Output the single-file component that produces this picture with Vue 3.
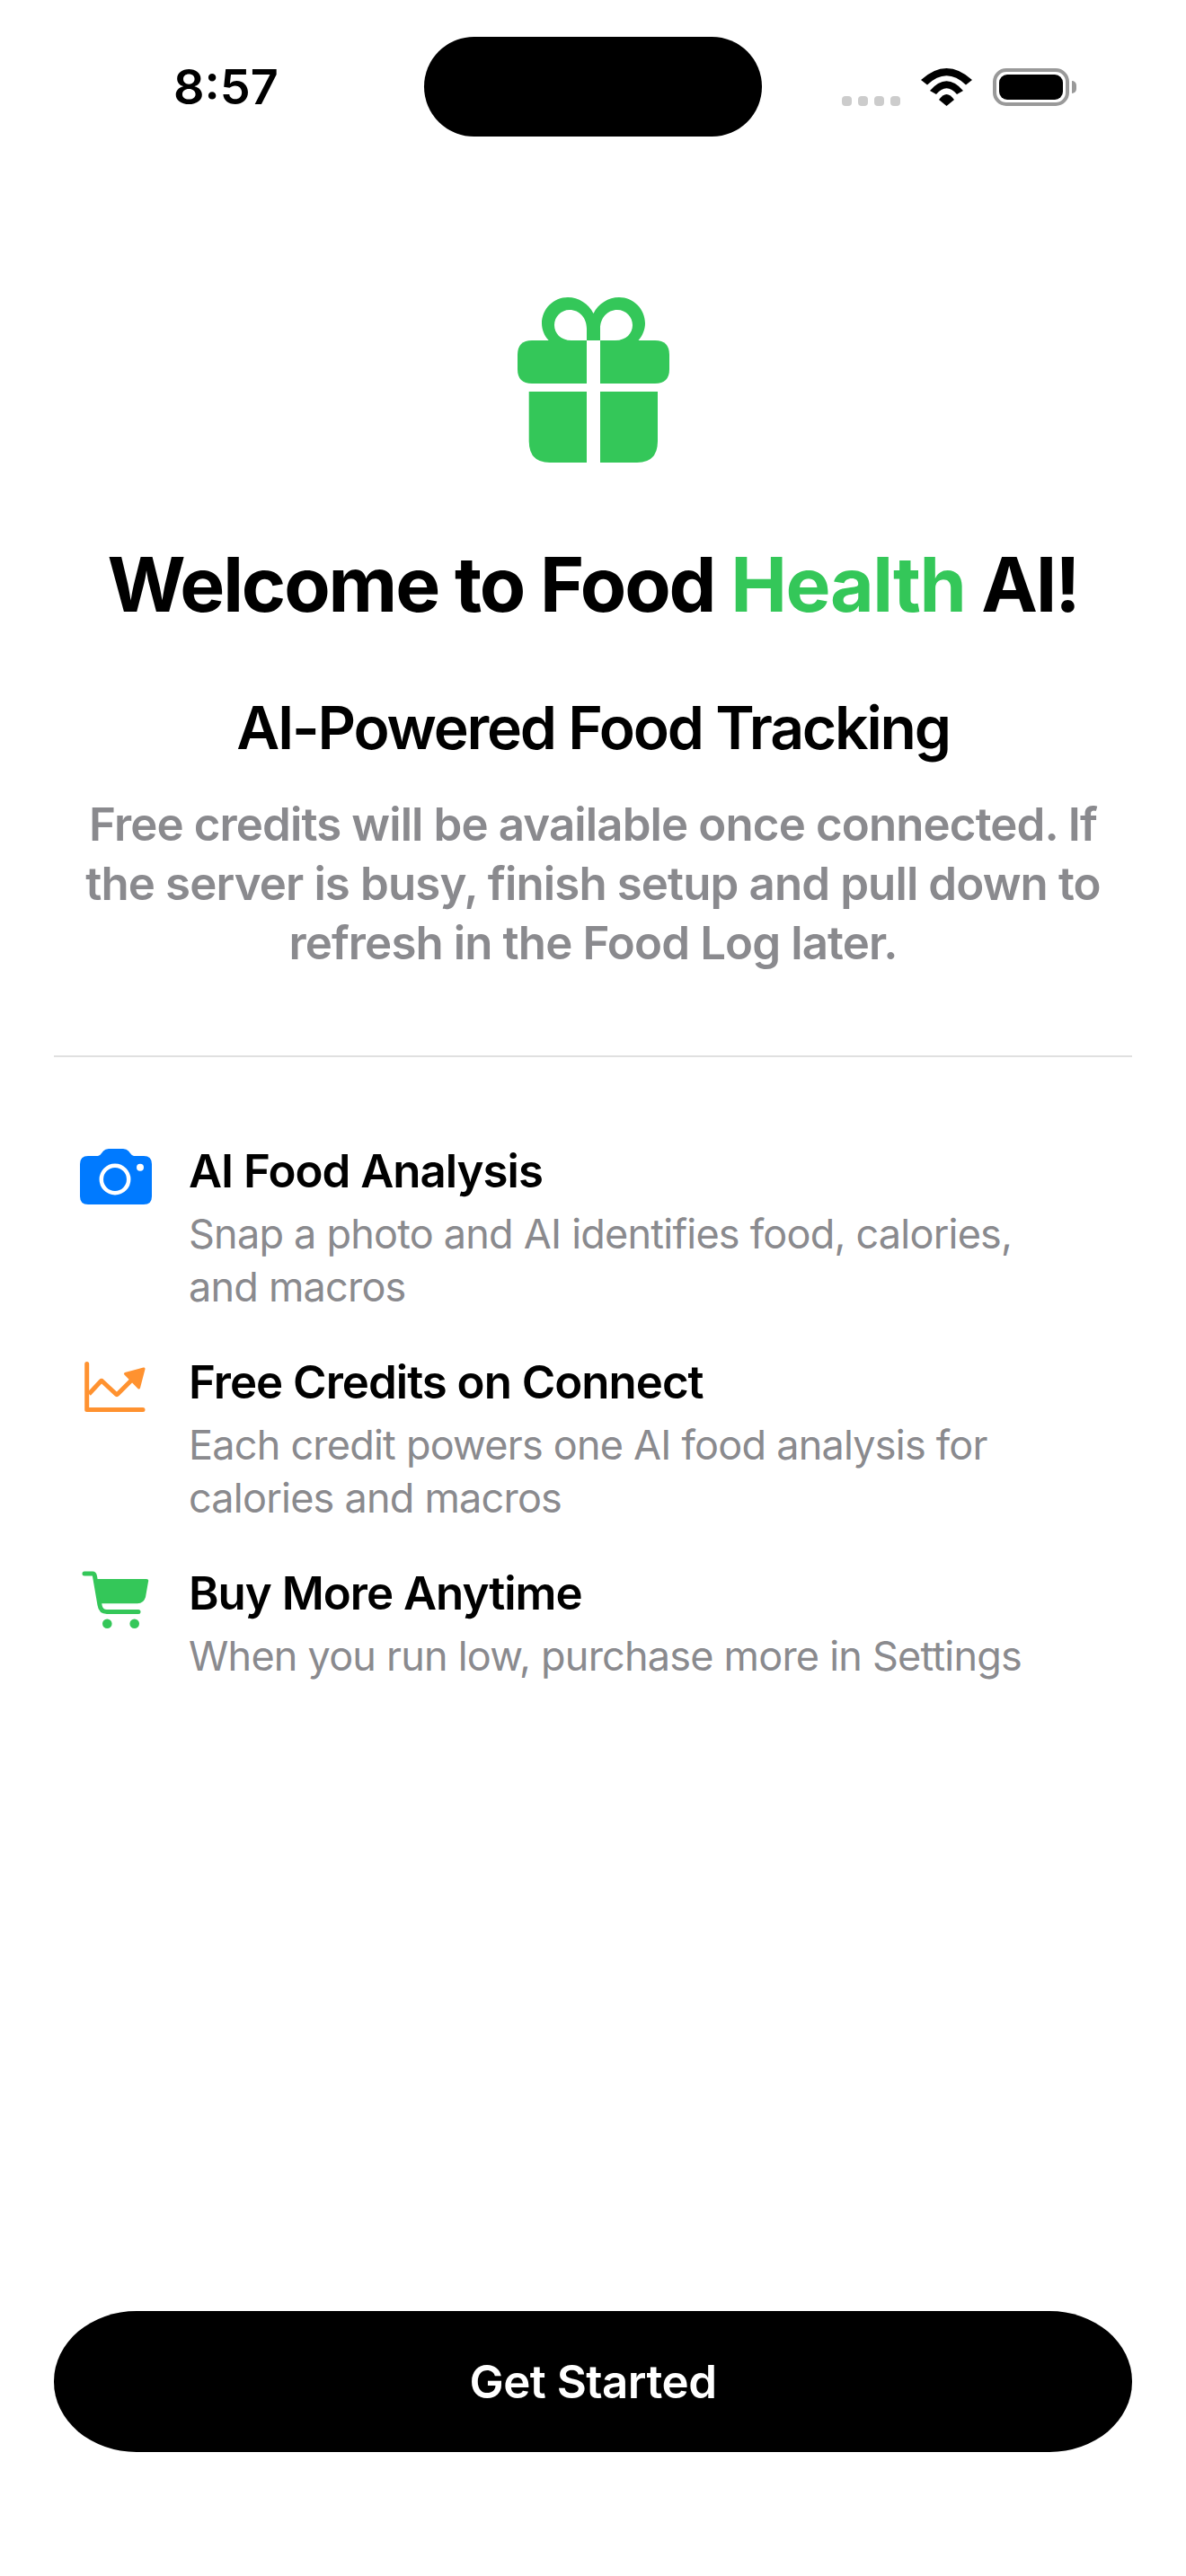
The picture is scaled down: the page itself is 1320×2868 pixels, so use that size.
<template>
  <div class="page">
    <div class="status-bar">
      <div class="time">8:57</div>
      <div class="island"></div>
      <div class="status-icons">
        <div class="signal">
          <span v-for="n in 4" :key="n" class="dot"></span>
        </div>
        <svg class="wifi" width="57" height="42" viewBox="0 0 57 42">
          <path d="M0 13Q28.500-13 57 13L50 18.500Q28.500-1.900 7 18.500Z" />
          <path d="M10 25Q28.500 3.600 47 25L40 29Q28.500 15.600 17 29Z" />
          <path d="M20 35Q28.500 23 37 35L28.500 42Z" />
        </svg>
        <div class="battery">
          <div class="battery-fill"></div>
        </div>
        <div class="battery-nub"></div>
      </div>
    </div>

    <svg class="gift" width="169" height="184" viewBox="0 0 169 184">
      <path d="M16 48H77V96H16Q0 96 0 80V64Q0 48 16 48Z" />
      <path d="M92 48H153Q169 48 169 64V80Q169 96 153 96H92Z" />
      <path d="M12.700 105H77V184H36Q12.700 184 12.700 160Z" />
      <path d="M92 105H156V160Q156 184 133 184H92Z" />
      <path
        fill-rule="evenodd"
        d="M34.700 48C30 43 27 36 27 29C27 13 40 0 56 0C68 0 79 7 84.500 18C90 7 101 0 113 0C129 0 142 13 142 29C142 36 139 43 134.500 48ZM77 48H60C48 48 41 40 41 31C41 22 48 14 58 14C69 14 77 23 77 35ZM92 48H109C121 48 128 40 128 31C128 22 121 14 111 14C100 14 92 23 92 35Z"
      />
    </svg>

    <h1 class="title">Welcome to Food <span class="accent">Health</span> AI!</h1>
    <h2 class="subtitle">AI-Powered Food Tracking</h2>
    <p class="intro">Free credits will be available once connected. If the server is busy, finish setup and pull down to refresh in the Food Log later.</p>

    <div class="divider"></div>

    <div class="features">
      <div class="feature">
        <div class="feature-icon">
          <svg width="80" height="62" viewBox="0 0 80 62">
            <path fill="#007AFF" d="M9 8H20Q22 8 24 5L26 2.500Q28 0 32 0H48Q52 0 54 2.500L56 5Q58 8 60 8H71Q80 8 80 17V53Q80 62 71 62H9Q0 62 0 53V17Q0 8 9 8Z" />
            <circle cx="39" cy="34" r="15.200" fill="none" stroke="#fff" stroke-width="4.500" />
            <circle cx="67" cy="20.700" r="4" fill="#fff" />
          </svg>
        </div>
        <div class="feature-text">
          <div class="feature-title">AI Food Analysis</div>
          <div class="feature-desc">Snap a photo and AI identifies food, calories, and macros</div>
        </div>
      </div>
      <div class="feature">
        <div class="feature-icon">
          <svg width="80" height="62" viewBox="0 0 80 62">
            <path fill="none" stroke="#FF9230" stroke-width="5" stroke-linecap="round" stroke-linejoin="round" d="M7.700 4.500V55.500H70" />
            <path fill="none" stroke="#FF9230" stroke-width="5" stroke-linejoin="round" d="M10 38L23 24Q24 23 25 24L40 38Q41 39 42 38L59 21" />
            <path fill="#FF9230" stroke="#FF9230" stroke-width="3" stroke-linejoin="round" d="M50.500 15.500L71 10L65.500 31Z" />
          </svg>
        </div>
        <div class="feature-text">
          <div class="feature-title">Free Credits on Connect</div>
          <div class="feature-desc">Each credit powers one AI food analysis for calories and macros</div>
        </div>
      </div>
      <div class="feature">
        <div class="feature-icon">
          <svg width="80" height="68" viewBox="0 0 80 68">
            <path fill="none" stroke="#34C759" stroke-width="5" stroke-linecap="round" stroke-linejoin="round" d="M5 3H14Q16 3 16.500 6L22 38Q23 45.500 30 45.500H65" />
            <path fill="#34C759" d="M18.700 9H74Q77 9 76 12L73 29Q71 36.300 64 36.300H23Z" />
            <circle cx="30.300" cy="58.700" r="5.300" fill="#34C759" />
            <circle cx="60.700" cy="58.700" r="5.300" fill="#34C759" />
          </svg>
        </div>
        <div class="feature-text">
          <div class="feature-title">Buy More Anytime</div>
          <div class="feature-desc">When you run low, purchase more in Settings</div>
        </div>
      </div>
    </div>

    <button class="start-btn">Get Started</button>
  </div>
</template>

<script setup>
</script>

<style>
html, body {
  margin: 0;
  background: #fff;
}
</style>

<style scoped>
.page {
  display: flex;
  flex-direction: column;
  align-items: center;
  box-sizing: border-box;
  width: 1320px;
  height: 2868px;
  padding: 41px 60px 138px;
  background: #fff;
  color: #000;
  font-family: Inter, "Liberation Sans", sans-serif;
}

.status-bar {
  display: grid;
  grid-template-columns: 412px 376px 1fr;
  align-items: center;
  width: 1200px;
  height: 111px;
}
.time {
  padding-left: 133px;
  font-size: 54px;
  font-weight: 600;
  line-height: 60px;
}
.island {
  height: 111px;
  border-radius: 56px;
  background: #000;
}
.status-icons {
  display: flex;
  align-items: flex-start;
  height: 42px;
  padding-left: 89px;
}
.signal {
  display: flex;
  gap: 7px;
  margin-top: 31px;
}
.dot {
  width: 11px;
  height: 11px;
  border-radius: 4px;
  background: #ccc;
}
.wifi {
  flex: none;
  margin-left: 23px;
  fill: #000;
}
.battery {
  flex: none;
  box-sizing: border-box;
  width: 85px;
  height: 42px;
  margin-left: 23px;
  padding: 3px;
  border: 4px solid #999;
  border-radius: 15px;
}
.battery-fill {
  height: 100%;
  border-radius: 9px;
  background: #000;
}
.battery-nub {
  flex: none;
  width: 5px;
  height: 14px;
  margin: 14px 0 0 3px;
  border-radius: 0 5px 5px 0;
  background: #999;
}

.gift {
  flex: none;
  margin-top: 179px;
  fill: #34C759;
}
.title {
  margin: 86px 0 0;
  font-size: 84px;
  font-weight: 700;
  line-height: 100px;
  letter-spacing: -2.1px;
  white-space: nowrap;
}
.accent {
  color: #34C759;
  letter-spacing: -1.4px;
}
.subtitle {
  margin: 70px 0 0;
  font-size: 66px;
  font-weight: 600;
  line-height: 78px;
  letter-spacing: -2.2px;
}
.intro {
  margin: 36px 0 0;
  color: #8a8a8e;
  font-size: 51px;
  font-weight: 600;
  line-height: 66px;
  letter-spacing: -0.88px;
  text-align: center;
}
.divider {
  flex: none;
  width: 100%;
  height: 2px;
  margin-top: 92px;
  background: #e0e0e0;
}

.features {
  display: flex;
  flex-direction: column;
  gap: 47px;
  width: 100%;
  margin-top: 97px;
}
.feature {
  display: flex;
}
.feature-icon {
  flex: none;
  box-sizing: border-box;
  width: 150px;
  padding: 5px 0 0 29px;
}
.feature-text {
  width: 960px;
}
.feature-title {
  font-size: 51px;
  font-weight: 600;
  line-height: 60px;
  letter-spacing: -1px;
}
.feature-desc {
  margin-top: 10px;
  color: #8a8a8e;
  font-size: 45px;
  line-height: 59px;
  letter-spacing: -0.78px;
}

.start-btn {
  flex: none;
  width: 100%;
  height: 157px;
  margin-top: auto;
  border: 0;
  border-radius: 92px / 78px;
  background: #000;
  color: #fff;
  font-family: inherit;
  font-size: 51px;
  font-weight: 600;
  letter-spacing: -0.5px;
}
</style>
